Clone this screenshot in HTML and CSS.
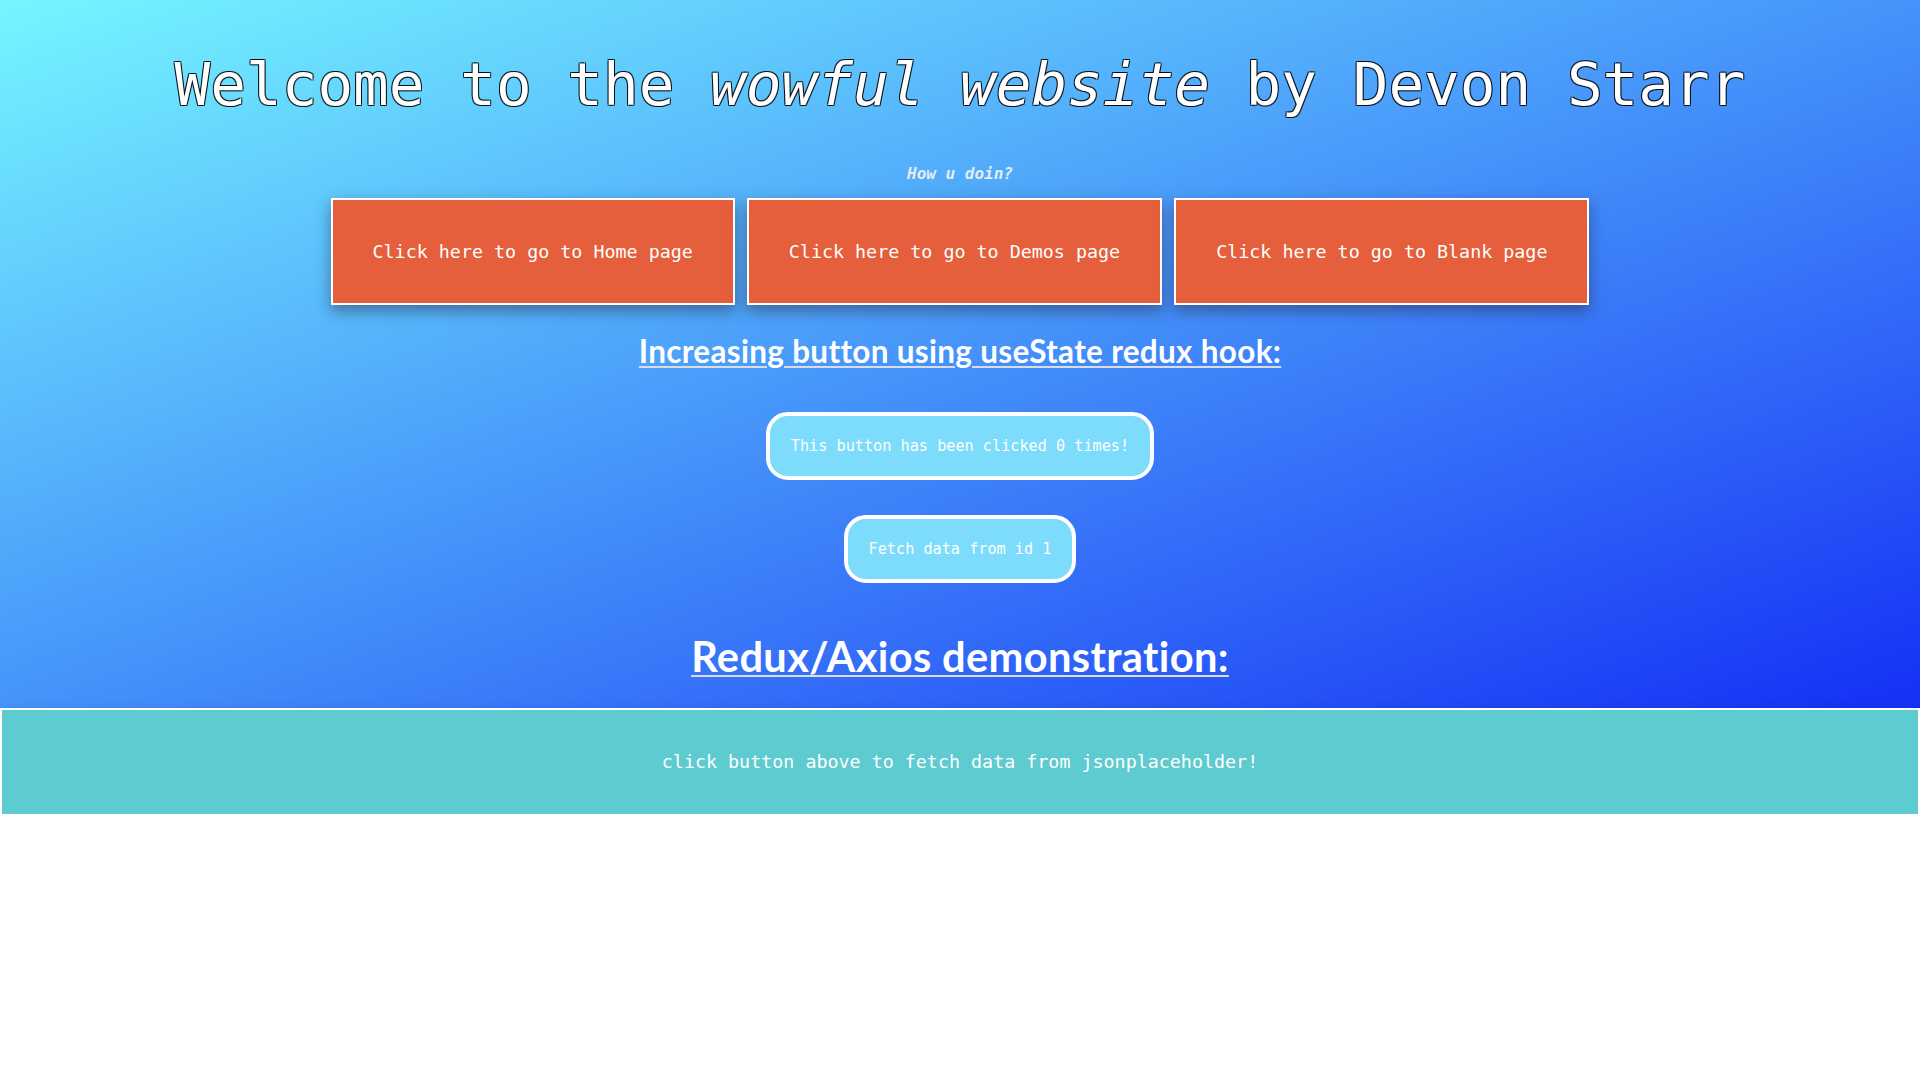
FILE: index.html
```html
<!DOCTYPE html>
<html lang="en">
<head>
<meta charset="utf-8">
<title>wowful website</title>
<link rel="stylesheet" href="styles.css">
</head>
<body>
<header class="hero">
  <h1 class="title">Welcome to the <em>wowful website</em> by Devon Starr</h1>
  <p class="sub">How u doin?</p>
  <nav class="nav">
    <a class="nav-btn" href="#">Click here to go to Home page</a>
    <a class="nav-btn" href="#">Click here to go to Demos page</a>
    <a class="nav-btn" href="#">Click here to go to Blank page</a>
  </nav>
  <h2 class="h-inc">Increasing button using useState redux hook:</h2>
  <button class="pill pill-count">This button has been clicked 0 times!</button>
  <button class="pill pill-fetch">Fetch data from id 1</button>
  <h1 class="h-redux">Redux/Axios demonstration:</h1>
</header>
<section class="panel">click button above to fetch data from jsonplaceholder!</section>
</body>
</html>
```
FILE: styles.css
```css
html, body {
  margin: 0;
  padding: 0;
  background: #ffffff;
}

body {
  font-family: "DejaVu Sans Mono", "Liberation Mono", monospace;
  color: #ffffff;
}

.hero {
  display: flex;
  flex-direction: column;
  align-items: center;
  padding: 50px 0 27px;
  background: linear-gradient(to bottom right, #76f6ff, #1530f5);
}

.title {
  margin: 0;
  font-size: 59.3px;
  line-height: 70px;
  font-weight: normal;
  white-space: nowrap;
  text-shadow: -1px -1px 0 rgba(0,0,0,0.75), 1px -1px 0 rgba(0,0,0,0.75), -1px 1px 0 rgba(0,0,0,0.75), 1px 1px 0 rgba(0,0,0,0.75);
}

.title em {
  font-style: italic;
}

.sub {
  margin: 44px 0 0;
  font-size: 16px;
  line-height: 20px;
  font-weight: bold;
  font-style: italic;
  color: #e4ecf3;
}

.nav {
  display: flex;
  gap: 12px;
  margin-top: 14px;
}

.nav-btn {
  display: block;
  padding: 40px;
  border: 2px solid #ffffff;
  background: #e55f3c;
  color: #ffffff;
  text-decoration: none;
  font-size: 18.35px;
  line-height: 23px;
  white-space: nowrap;
  box-shadow: 0 6px 14px rgba(40, 40, 60, 0.5);
}

.h-inc,
.h-redux {
  margin: 0;
  font-family: Lato, "Open Sans", sans-serif;
  font-weight: 700;
  text-decoration: underline;
  text-decoration-color: #dcdcdc;
  text-decoration-thickness: 2px;
  text-underline-offset: 3px;
  white-space: nowrap;
}

.h-inc {
  margin-top: 26px;
  font-size: 31.5px;
  letter-spacing: 0.3px;
  line-height: 40px;
}

.pill {
  display: block;
  font-family: "DejaVu Sans Mono", "Liberation Mono", monospace;
  font-size: 15.2px;
  line-height: 20px;
  color: #ffffff;
  background: #7ddbfb;
  border: 4px solid #ffffff;
  border-radius: 22px;
  padding: 20px 21px;
  white-space: nowrap;
  cursor: pointer;
}

.pill-count {
  margin-top: 41px;
}

.pill-fetch {
  margin-top: 35px;
}

.h-redux {
  margin-top: 48px;
  font-size: 41.6px;
  letter-spacing: 0.35px;
  line-height: 50px;
}

.panel {
  border: 2px solid #ffffff;
  background: #5ecbd0;
  padding: 40px;
  text-align: center;
  font-size: 18.35px;
  line-height: 24px;
  color: #ffffff;
  box-shadow: 0 8px 12px rgba(0, 0, 0, 0.45);
}
```
